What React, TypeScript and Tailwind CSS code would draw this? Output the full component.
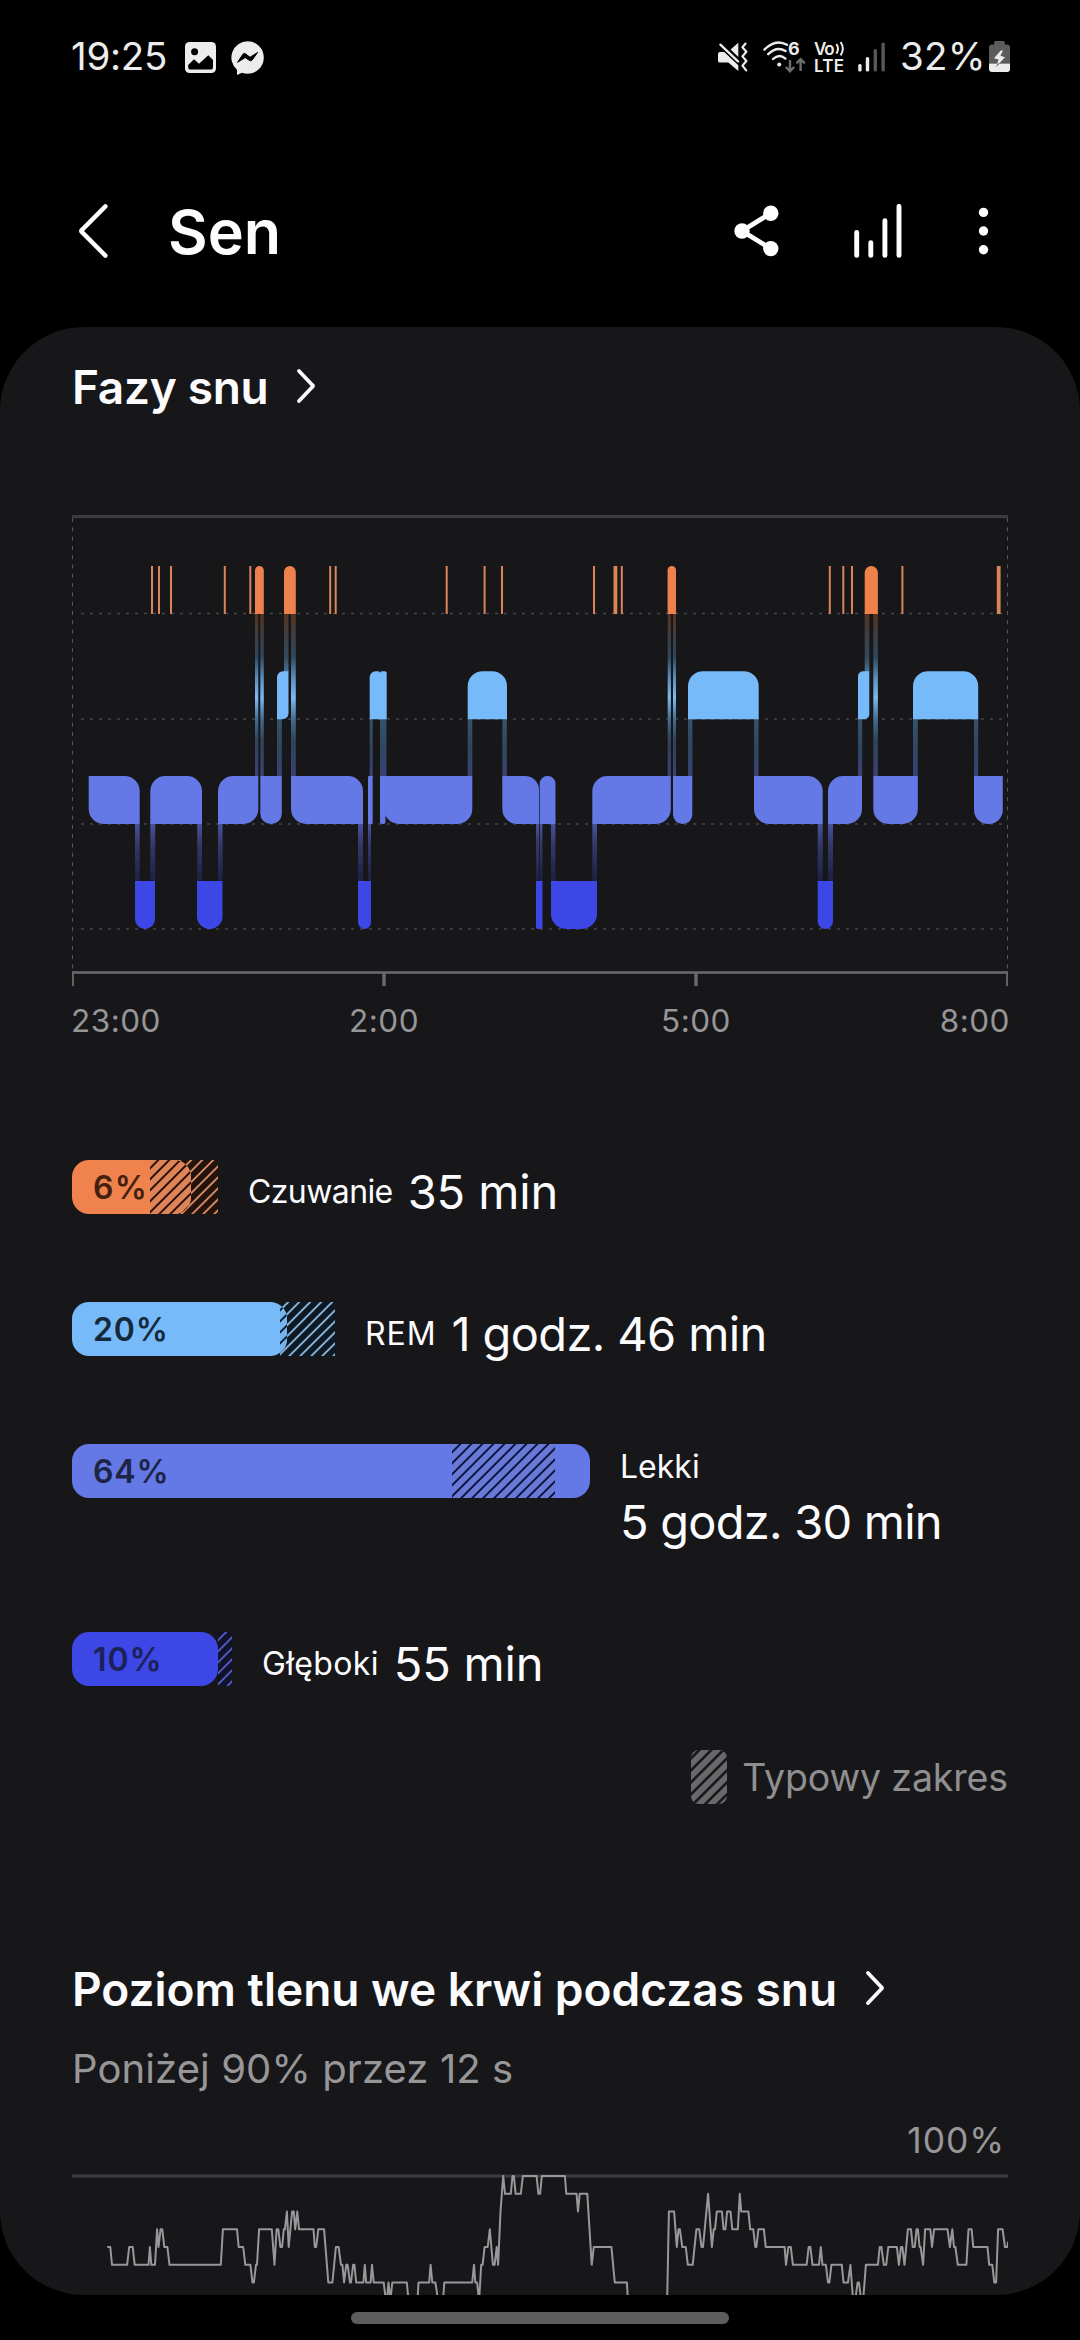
import type { ReactNode } from "react";

type Level = "rem" | "light" | "deep";

// x0, x1 and the radii of the top-left, top-right, bottom-right and bottom-left corners
type Segment = [number, number, number, number, number, number];

const levelTop = { awake: 566, rem: 671.2, light: 776, deep: 881 };
const levelColor = {
  awake: "#ef824c",
  rem: "#77bafa",
  light: "#6478e6",
  deep: "#3c47e6",
};

const segments: Record<Level, Segment[]> = {
  light: [
    [88.7, 139.7, 0, 15, 0, 15],
    [150.3, 202, 15, 15, 0, 0],
    [218, 258.3, 15, 0, 15, 0],
    [260.3, 281.8, 0, 0, 10.5, 10.5],
    [291, 363, 0, 15, 0, 15],
    [368, 372.7, 1, 0, 1, 0],
    [380, 385.5, 0, 0, 2, 2],
    [384, 472.3, 0, 0, 15, 15],
    [502.3, 539, 0, 14, 0, 15],
    [539.7, 555.5, 7.5, 7.5, 0, 0],
    [592.3, 670.8, 15, 0, 15, 0],
    [673, 692.3, 0, 0, 9.5, 9.5],
    [754, 822.7, 0, 15, 0, 15],
    [828, 862, 15, 0, 15, 0],
    [873.3, 917.8, 0, 0, 15, 15],
    [974, 1002.8, 0, 0, 14, 14],
  ],
  rem: [
    [277, 288.5, 6, 0, 6, 0],
    [369.7, 382, 6, 5, 0, 0],
    [380.5, 386.7, 1, 2, 0, 0],
    [467.7, 507, 15, 15, 0, 0],
    [688, 758.7, 15, 15, 0, 0],
    [858, 869.3, 5, 0, 5, 0],
    [913, 978.2, 15, 15, 0, 0],
  ],
  deep: [
    [135, 155, 0, 0, 10, 10],
    [197, 222.5, 0, 0, 12.5, 12.5],
    [358, 371, 0, 0, 6.5, 6.5],
    [536, 542.5, 0, 0, 2, 2],
    [551, 597, 0, 0, 15, 15],
    [817.7, 833, 0, 0, 7.5, 7.5],
  ],
};

// x and width of every period spent awake
const awakeTicks: [number, number][] = [
  [151, 2], [158, 2], [170, 2], [223.8, 2], [249.3, 2], [329.2, 2], [334.7, 2],
  [445.7, 2], [483.6, 2], [501, 2], [593, 2], [613.5, 3.8], [620.8, 2],
  [828.8, 2], [842.3, 2], [851, 2], [901.4, 2], [996.8, 3.8],
];
const awakeBlocks: [number, number][] = [
  [255, 8.8], [284, 11.8], [667.6, 8.4], [864.7, 13.2],
];

const connectors = {
  awakeToRem: [[284, 4.5], [864.7, 4.6]],
  awakeToLight: [[255, 3.3], [260.3, 3.5], [291, 4.8], [667.7, 3.2], [673, 3], [873.3, 4.6]],
  remToLight: [
    [277, 4.8], [369.7, 3], [380, 6.5], [467.7, 4.6], [502.3, 4.6], [688, 4.4],
    [754, 4.6], [858, 4.2], [913, 4.8], [974, 4.2],
  ],
  lightToDeep: [
    [135, 4.7], [150.3, 4.9], [197.2, 4.8], [218, 4.6], [358, 5], [368, 3], [536, 3],
    [539.8, 2.6], [551, 4.4], [592.3, 4.7], [817.7, 5], [828, 5],
  ],
};

const gridLines = [613.5, 719, 824, 929];
const ticks = [73, 384, 696, 1007];

const typicalRanges = [
  {
    key: "awake", label: "Czuwanie", value: "35 min", percent: "6%",
    bar: 119, from: 78, to: 146, gap: "mt-[119px]", stacked: false,
    color: "#f0834d", tint: "#dd8558", dark: "#2b0d06", under: "#24130d", line: "#d08a66",
    textColor: "text-[#44210f]", percentTracking: "tracking-[1.2px]",
    labelTracking: "tracking-[-0.6px]", valueTracking: "tracking-[-0.1px]",
  },
  {
    key: "rem", label: "REM", value: "1 godz. 46 min", percent: "20%",
    bar: 215, from: 208, to: 263, gap: "mt-[88px]", stacked: false,
    color: "#77bafa", tint: "#77b4ee", dark: "#0c2238", under: "#0f1924", line: "#86b2d8",
    textColor: "text-[#15293b]", percentTracking: "tracking-[0.8px]",
    labelTracking: "tracking-[0.9px]", valueTracking: "tracking-[-0.62px]",
  },
  {
    key: "light", label: "Lekki", value: "5 godz. 30 min", percent: "64%",
    bar: 518, from: 380, to: 483, gap: "mt-[88px]", stacked: true,
    color: "#6478e6", tint: "#687ad6", dark: "#0b1440", under: "#10132a", line: "#6478d0",
    textColor: "text-[#1d2444]", percentTracking: "tracking-[0.8px]",
    labelTracking: "tracking-[0px]", valueTracking: "tracking-[-0.76px]",
  },
  {
    key: "deep", label: "Głęboki", value: "55 min", percent: "10%",
    bar: 146, from: 146, to: 160, gap: "mt-[88px]", stacked: false,
    color: "#3c47e6", tint: "#3c47d8", dark: "#0b1040", under: "#11132a", line: "#4f5bc0",
    textColor: "text-[#1c2157]", percentTracking: "tracking-[0.9px]",
    labelTracking: "tracking-[0.35px]", valueTracking: "tracking-[-0.2px]",
  },
];

// [sample, percentage points below 100]
const oxygenFirst: [number, number][] = [
  [166, 4], [175, 4], [180, 5], [224, 5], [230, 4], [240, 4], [246, 5], [286, 5], [290, 4],
  [294, 5], [305, 5], [311, 3], [315, 4], [321, 3], [326, 3], [332, 4], [341, 4], [347, 5],
  [496, 5], [502, 3], [543, 3], [548, 4], [561, 4], [567, 5], [582, 5], [588, 6], [592, 6],
  [598, 5], [601, 5], [607, 3], [644, 3], [652, 5], [658, 3], [663, 3], [669, 4], [674, 4],
  [679, 3], [682, 3], [688, 2], [693, 4], [703, 2], [708, 2], [712, 3], [718, 2], [723, 3],
  [765, 3], [769, 4], [773, 4], [779, 3], [796, 3], [808, 6], [820, 6], [830, 4], [838, 4],
  [845, 5], [849, 5], [854, 6], [860, 5], [864, 5], [871, 6], [874, 6], [880, 5], [884, 5],
  [889, 6], [910, 6], [914, 5], [918, 6], [931, 6], [935, 5], [940, 6], [969, 6], [975, 7],
  [978, 7], [983, 6], [988, 7], [994, 6], [1036, 6], [1041, 7], [1067, 7], [1070, 6],
  [1101, 6], [1105, 5], [1110, 6], [1119, 6], [1127, 7], [1141, 7], [1145, 6], [1226, 6],
  [1231, 5], [1235, 6], [1240, 6], [1246, 7], [1252, 5], [1256, 5], [1262, 4], [1271, 4],
  [1277, 3], [1286, 5], [1291, 5], [1297, 4], [1301, 5], [1308, 2], [1316, 0], [1321, 1],
  [1338, 1], [1343, 0], [1347, 0], [1352, 1], [1367, 1], [1373, 0], [1413, 0], [1418, 1],
  [1423, 1], [1428, 0],
];
const oxygenSecond: [number, number][] = [
  [72, 0], [76, 1], [106, 1], [110, 2], [115, 1], [137, 1], [150, 5], [156, 4], [207, 4],
  [217, 6], [252, 6], [258, 8], [368, 8], [374, 2], [389, 2], [397, 4], [402, 3], [406, 3],
  [413, 4], [423, 4], [429, 5], [443, 5], [454, 3], [462, 3], [469, 4], [473, 4], [488, 1],
  [499, 4], [504, 3], [508, 3], [513, 2], [528, 2], [533, 3], [538, 3], [543, 2], [553, 2],
  [558, 3], [574, 3], [580, 1], [584, 2], [605, 2], [610, 3], [619, 3], [625, 4], [628, 4],
  [634, 3], [650, 3], [655, 4], [710, 4], [714, 5], [721, 4], [728, 4], [734, 5], [774, 5],
  [780, 4], [785, 4], [791, 5], [810, 5], [815, 4], [820, 5], [830, 5], [836, 6], [840, 6],
  [846, 5], [876, 5], [881, 6], [894, 6], [901, 5], [909, 7], [915, 7], [922, 6], [926, 6],
  [932, 7], [938, 7], [946, 5], [981, 5], [986, 4], [991, 4], [998, 5], [1005, 5], [1011, 4],
  [1036, 4], [1042, 5], [1048, 4], [1052, 4], [1058, 5], [1068, 3], [1077, 3], [1082, 4],
  [1088, 4], [1093, 3], [1097, 3], [1102, 4], [1105, 4], [1112, 5], [1118, 3], [1133, 3],
  [1138, 4], [1144, 3], [1183, 3], [1190, 4], [1197, 3], [1202, 4], [1206, 4], [1213, 5],
  [1238, 5], [1244, 3], [1253, 3], [1258, 4], [1299, 4], [1304, 5], [1313, 5], [1319, 6],
  [1324, 6], [1330, 3], [1343, 3], [1350, 4], [1357, 4], [1359, 3.7],
];

const oxygenPoints = [
  ...oxygenFirst,
  ...oxygenSecond.map(([s, v]): [number, number] => [s + 1423, v]),
]
  .map(([s, v]) => `${(s * 0.3444 - 22).toFixed(1)},${(3 + v * 17.75).toFixed(1)}`)
  .join(" ");

function segmentPath([x0, x1, tl, tr, br, bl]: Segment, y: number) {
  const b = y + 48;
  return [
    `M${x0 + tl} ${y}H${x1 - tr}`,
    `A${tr} ${tr} 0 0 1 ${x1} ${y + tr}V${b - br}`,
    `A${br} ${br} 0 0 1 ${x1 - br} ${b}H${x0 + bl}`,
    `A${bl} ${bl} 0 0 1 ${x0} ${b - bl}V${y + tl}`,
    `A${tl} ${tl} 0 0 1 ${x0 + tl} ${y}Z`,
  ].join("");
}

function Connectors({ items, y, height, fill }: { items: number[][]; y: number; height: number; fill: string }) {
  return (
    <>
      {items.map(([x, w]) => (
        <rect key={x} x={x} y={y} width={w} height={height} fill={fill} />
      ))}
    </>
  );
}

function StageChart() {
  return (
    <svg className="mt-[98px] block h-[472px] w-[936px]" viewBox="72 515 936 472">
      <defs>
        <linearGradient id="awakeToRem" x1="0" y1="0" x2="0" y2="1">
          <stop offset="0" stopColor="#57331f" />
          <stop offset="0.3" stopColor="#413c3c" />
          <stop offset="0.75" stopColor="#33495d" />
          <stop offset="1" stopColor="#4a7394" />
        </linearGradient>
        <linearGradient id="awakeToLight" gradientUnits="userSpaceOnUse" x1="0" y1="613" x2="0" y2="776">
          <stop offset="0" stopColor="#57331f" />
          <stop offset="0.12" stopColor="#413c3c" />
          <stop offset="0.27" stopColor="#2e475c" />
          <stop offset="0.4" stopColor="#5a8fbe" />
          <stop offset="0.52" stopColor="#7abaf2" />
          <stop offset="0.66" stopColor="#41698c" />
          <stop offset="0.78" stopColor="#2f4358" />
          <stop offset="1" stopColor="#394174" />
        </linearGradient>
        <linearGradient id="remToLight" x1="0" y1="0" x2="0" y2="1">
          <stop offset="0" stopColor="#36536c" />
          <stop offset="0.5" stopColor="#2f4660" />
          <stop offset="1" stopColor="#394176" />
        </linearGradient>
        <linearGradient id="lightToDeep" x1="0" y1="0" x2="0" y2="1">
          <stop offset="0" stopColor="#4753a0" />
          <stop offset="0.35" stopColor="#34396a" />
          <stop offset="1" stopColor="#1d1f42" />
        </linearGradient>
      </defs>

      <path d="M72 516.5H1008" stroke="#3c3c3e" strokeWidth="3" />
      <path d="M72.5 518V971M1007.5 518V971" stroke="#58585a" strokeWidth="1" strokeDasharray="4 5.3" />
      {gridLines.map((y) => (
        <path key={y} d={`M81 ${y}H1005`} stroke="#454547" strokeWidth="1.6" strokeDasharray="3 6" />
      ))}
      <path d="M72 972.5H1008" stroke="#6b6b6d" strokeWidth="2.6" />
      {ticks.map((x) => (
        <path key={x} d={`M${x} 973V986`} stroke="#6b6b6d" strokeWidth={x > 100 && x < 1000 ? 3.4 : 1.8} />
      ))}

      <Connectors items={connectors.awakeToRem} y={613} height={59} fill="url(#awakeToRem)" />
      <Connectors items={connectors.awakeToLight} y={613} height={164} fill="url(#awakeToLight)" />
      <Connectors items={connectors.remToLight} y={718} height={59} fill="url(#remToLight)" />
      <Connectors items={connectors.lightToDeep} y={823} height={59} fill="url(#lightToDeep)" />

      {(["light", "rem", "deep"] as Level[]).map((level) =>
        segments[level].map((segment) => (
          <path
            key={`${level}-${segment[0]}`}
            d={segmentPath(segment, levelTop[level])}
            fill={levelColor[level]}
          />
        )),
      )}
      {awakeTicks.map(([x, w]) => (
        <rect key={x} x={x} y={levelTop.awake} width={w} height="48" fill="#d98459" />
      ))}
      {awakeBlocks.map(([x, w]) => (
        <path
          key={x}
          d={segmentPath([x, x + w, w / 2, w / 2, 0, 0], levelTop.awake)}
          fill={levelColor.awake}
        />
      ))}
    </svg>
  );
}

interface HatchProps {
  from: number;
  to: number;
  color: string;
  width?: number;
  period?: number;
}

function Hatch({ from, to, color, width = 1.9, period = 11 }: HatchProps) {
  const lines: string[] = [];
  for (let x = from + 9.3 - period; x < to + 55; x += period) {
    lines.push(`M${x - 3} 57L${x + 57} -3`);
  }
  return <path d={lines.join("")} stroke={color} strokeWidth={width} fill="none" />;
}

function RangeBar({ range }: { range: (typeof typicalRanges)[number] }) {
  const width = Math.max(range.bar, range.to);
  return (
    <div className="relative h-[54px] flex-none" style={{ width }}>
      <svg className="block h-[54px]" width={width} height="54">
        <defs>
          <clipPath id={`${range.key}-range`}>
            <rect x={range.from} y="0" width={range.to - range.from} height="54" />
          </clipPath>
          <clipPath id={`${range.key}-bar`}>
            <rect x="0" y="0" width={range.bar} height="54" rx="17" />
          </clipPath>
        </defs>
        <g clipPath={`url(#${range.key}-range)`}>
          <rect x={range.from} width={range.to - range.from} height="54" fill={range.under} />
          <Hatch from={range.from - 55} to={range.to} color={range.line} />
        </g>
        <g clipPath={`url(#${range.key}-bar)`}>
          <rect width={range.bar} height="54" fill={range.color} />
          <g clipPath={`url(#${range.key}-range)`}>
            <rect x={range.from} width={range.to - range.from} height="54" fill={range.tint} />
            <Hatch from={range.from - 55} to={range.to} color={range.dark} />
          </g>
        </g>
      </svg>
      <span
        className={`absolute top-0 left-[21px] text-[32px] leading-[55px] font-semibold ${range.percentTracking} ${range.textColor}`}
      >
        {range.percent}
      </span>
    </div>
  );
}

function RangeRow({ range }: { range: (typeof typicalRanges)[number] }) {
  const label = (
    <p className={`text-[32px] leading-[46px] whitespace-nowrap ${range.labelTracking}`}>{range.label}</p>
  );
  const value = (
    <p className={`text-[47px] leading-[64px] whitespace-nowrap ${range.valueTracking}`}>{range.value}</p>
  );

  if (range.stacked) {
    return (
      <div className={`flex h-[100px] gap-[30px] ${range.gap}`}>
        <RangeBar range={range} />
        <div>
          {label}
          {value}
        </div>
      </div>
    );
  }

  return (
    <div className={`flex h-[54px] gap-[30px] ${range.gap}`}>
      <RangeBar range={range} />
      <div className="flex h-[64px] items-center gap-[15px]">
        {label}
        {value}
      </div>
    </div>
  );
}

function SectionTitle({ children, tracking }: { children: ReactNode; tracking: string }) {
  return (
    <div className="flex h-[60px] items-center">
      <h2 className={`text-[46px] leading-[60px] font-semibold whitespace-nowrap text-[#fcfcff] ${tracking}`}>
        {children}
      </h2>
      <svg className="mb-[2px] ml-[26px] h-[38px] w-[24px]" viewBox="0 0 24 38" fill="none">
        <path d="M5 4L18.5 18.2Q19.3 19 18.5 19.8L5 34" stroke="#fcfcff" strokeWidth="3.8" strokeLinecap="round" />
      </svg>
    </div>
  );
}

function StatusBar() {
  return (
    <div className="flex h-[114px] items-center justify-between pr-[70px] pl-[71px] text-[38.5px] text-[#ececec]">
      <div className="flex items-center">
        <span className="w-[114px] tracking-[-0.28px]">19:25</span>
        <svg className="h-[31px] w-[31px]" viewBox="0 0 31 31">
          <rect width="31" height="31" rx="4.5" fill="#ececec" />
          <circle cx="9.6" cy="9.7" r="3.5" fill="#000" />
          <path d="M3.2 23L9 17.3L14 21.7L23.3 13.3L28 18V25Q28 27.6 25.6 27.6H5.6Q3.2 27.6 3.2 25Z" fill="#000" />
        </svg>
        <svg className="mt-[1px] ml-[15px] h-[34px] w-[33px]" viewBox="0 0 33 34">
          <path
            d="M16.5 0.2A16.3 16.3 0 0 1 16.5 32.8Q13.5 32.8 11 31.8L6 34V28.8A16.3 16.3 0 0 1 16.5 0.2Z"
            fill="#ececec"
          />
          <path
            d="M6.6 21.3L12 13.1Q13 11.9 14.4 12.8L19 16.3L26.6 11.4L21.2 19Q20.2 20.2 18.8 19.6L14.2 16.6Z"
            fill="#000"
            stroke="#000"
            strokeLinejoin="round"
          />
        </svg>
      </div>

      <div className="flex items-center">
        <svg className="h-[30px] w-[30px]" viewBox="0 0 30 30">
          <path d="M12.6 7.6L20.3 0.7V15Z" fill="#ececec" />
          <path d="M0 12Q0 10 2 10H6.2L20.3 23.2V29L10.3 20.6H2Q0 20.6 0 18.4Z" fill="#ececec" />
          <path d="M2.4 2.6L20 19.4" stroke="#ececec" strokeWidth="2.3" strokeLinecap="round" />
          <path
            d="M27.6 1.6L24.4 5.2L28.4 9.8L24.4 14.4L28.4 19L24.4 23.6L28.2 28.4"
            fill="none"
            stroke="#ececec"
            strokeWidth="2.2"
            strokeLinejoin="round"
            strokeLinecap="round"
          />
        </svg>
        <svg className="ml-[15px] h-[34px] w-[43px] overflow-visible" viewBox="0 0 43 34" fill="none">
          <g stroke="#ececec" strokeWidth="2.4" strokeLinecap="round">
            <path d="M1.4 9.6Q12.5 -1.6 24 4.8" />
            <path d="M5.2 14.2Q13.6 5.6 22.6 11" />
            <path d="M10 19Q16.2 13 22.4 18.6" />
          </g>
          <circle cx="16.2" cy="24.4" r="2" fill="#ececec" />
          <path d="M27 20V31M22.8 27L27 31.2L31.2 27" stroke="#6e6e6e" strokeWidth="2.4" />
          <path d="M37.6 31V19.6M33.4 23.4L37.6 19.2L41.8 23.4" stroke="#6e6e6e" strokeWidth="2.4" />
          <text x="25" y="15" className="text-[18px] font-bold" fill="#ececec">6</text>
        </svg>
        <svg className="ml-[8px] h-[34px] w-[31px] overflow-visible" viewBox="0 0 31 34" fill="none">
          <text x="0" y="14.6" className="text-[17px] font-semibold" textLength="20.5" fill="#ececec">Vo</text>
          <text x="0" y="31.6" className="text-[17px] font-semibold" textLength="30" fill="#ececec">LTE</text>
          <path d="M22.4 4Q25.6 8.6 22.4 13.6M26.6 2Q31 8.6 26.6 15.4" stroke="#ececec" strokeWidth="2" />
        </svg>
        <svg className="ml-[13px] h-[30px] w-[28px]" viewBox="0 0 28 30">
          <rect x="0.2" y="22" width="3.4" height="7.4" rx="1.5" fill="#ececec" />
          <rect x="7.8" y="15" width="3.4" height="14.4" rx="1.5" fill="#ececec" />
          <rect x="15.6" y="7" width="3.4" height="22.4" rx="1.5" fill="#585858" />
          <rect x="23.4" y="0.4" width="3.4" height="29" rx="1.5" fill="#585858" />
        </svg>
        <span className="ml-[14px] w-[89px] tracking-[0.3px]">32%</span>
        <svg className="h-[32px] w-[21px]" viewBox="0 0 21 32">
          <path d="M6.4 0H14.6Q15.8 0 15.8 1.4V3.6H18Q21 3.6 21 6.6V22.5H0V6.6Q0 3.6 3 3.6H5.2V1.4Q5.2 0 6.4 0Z" fill="#5c5c5c" />
          <path d="M0 22.5H21V28Q21 31 18 31H3Q0 31 0 28Z" fill="#ececec" />
          <path d="M11.8 9.4L5 17.2L9.6 18.6L7.2 25.4L16 16.2L11.4 14.8L14 9.4Z" fill="#ececec" />
          <path d="M8.6 22.6L7.2 26L10.6 22.6Z" fill="#5c5c5c" />
        </svg>
      </div>
    </div>
  );
}

function AppHeader() {
  return (
    <header className="flex h-[213px] items-center pt-[21px] pr-[90px] pl-[76px]">
      <svg className="h-[62px] w-[34px]" viewBox="0 0 34 62" fill="none">
        <path d="M29.4 6.4L5.8 30Q4.6 31 5.8 32L29.4 55.6" stroke="#fff" strokeWidth="4.4" strokeLinecap="round" />
      </svg>
      <h1 className="mt-[2px] ml-[58px] grow text-[61px] leading-[70px] font-semibold text-[#fcfcff]">Sen</h1>
      <svg className="h-[54px] w-[46px]" viewBox="0 0 46 54">
        <path d="M36.6 9.3L8 27L36.6 44.6" fill="none" stroke="#fff" strokeWidth="4.8" />
        <circle cx="8" cy="27" r="7.7" fill="#fff" />
        <circle cx="36.8" cy="9.3" r="7.7" fill="#fff" />
        <circle cx="36.8" cy="44.6" r="7.7" fill="#fff" />
      </svg>
      <svg className="ml-[73px] h-[54px] w-[50px]" viewBox="0 0 50 54" stroke="#fff" strokeWidth="4.9" strokeLinecap="round">
        <path d="M3.7 28.4V51.4M17.8 38.8V51.4M31.9 16.8V51.4M46 2.4V51.4" />
      </svg>
      <svg className="ml-[73px] h-[54px] w-[14px]" viewBox="0 0 14 54" fill="#fff">
        <circle cx="7.5" cy="8.4" r="4.7" />
        <circle cx="7.5" cy="27" r="4.7" />
        <circle cx="7.5" cy="45.7" r="4.7" />
      </svg>
    </header>
  );
}

export default function App() {
  return (
    <div className="h-[2340px] w-[1080px] overflow-hidden bg-black font-['Inter','Liberation_Sans',sans-serif]">
      <StatusBar />
      <AppHeader />

      <main className="h-[1968px] overflow-hidden rounded-[84px] bg-[#171719] px-[72px] pt-[30px] text-[#fcfcff]">
        <SectionTitle tracking="tracking-[-0.3px]">Fazy snu</SectionTitle>
        <StageChart />
        <div className="mt-[14px] grid h-[40px] grid-cols-[156px_312px_312px_156px] text-[31.5px] leading-[40px] tracking-[0.5px] text-[#969698]">
          <span className="-ml-px">23:00</span>
          <span className="text-center">2:00</span>
          <span className="text-center">5:00</span>
          <span className="-mr-[2px] text-right">8:00</span>
        </div>

        {typicalRanges.map((range) => (
          <RangeRow key={range.key} range={range} />
        ))}

        <div className="mt-[64px] flex h-[54px] items-center justify-end gap-[15px]">
          <svg className="h-[54px] w-[36px] rounded-[8px]" viewBox="0 0 36 54">
            <rect width="36" height="54" fill="#69696b" />
            <Hatch from={-55} to={36} color="#1a1a1c" width={2.7} period={12} />
          </svg>
          <span className="pt-[2px] text-[37.5px] leading-[56px] tracking-[-0.14px] text-[#8f8f91]">Typowy zakres</span>
        </div>

        <div className="mt-[155px]">
          <SectionTitle tracking="tracking-[0px]">Poziom tlenu we krwi podczas snu</SectionTitle>
        </div>
        <p className="mt-[25px] h-[50px] text-[40px] leading-[50px] tracking-[0.1px] text-[#979799]">
          Poniżej 90% przez 12 s
        </p>
        <p className="mt-[27px] h-[40px] pr-[3px] text-right text-[35.5px] leading-[40px] tracking-[0.9px] text-[#979799]">
          100%
        </p>
        <svg className="mt-[12px] block h-[122px] w-[936px]" viewBox="0 0 936 122">
          <path d="M0 3H936" stroke="#3c3c3e" strokeWidth="3.2" />
          <polyline points={oxygenPoints} fill="none" stroke="#98989a" strokeWidth="2" strokeLinejoin="round" />
        </svg>
      </main>

      <div className="flex h-[45px] justify-center pt-[17px]">
        <div className="h-[12px] w-[378px] rounded-full bg-[#5d5d5d]" />
      </div>
    </div>
  );
}
